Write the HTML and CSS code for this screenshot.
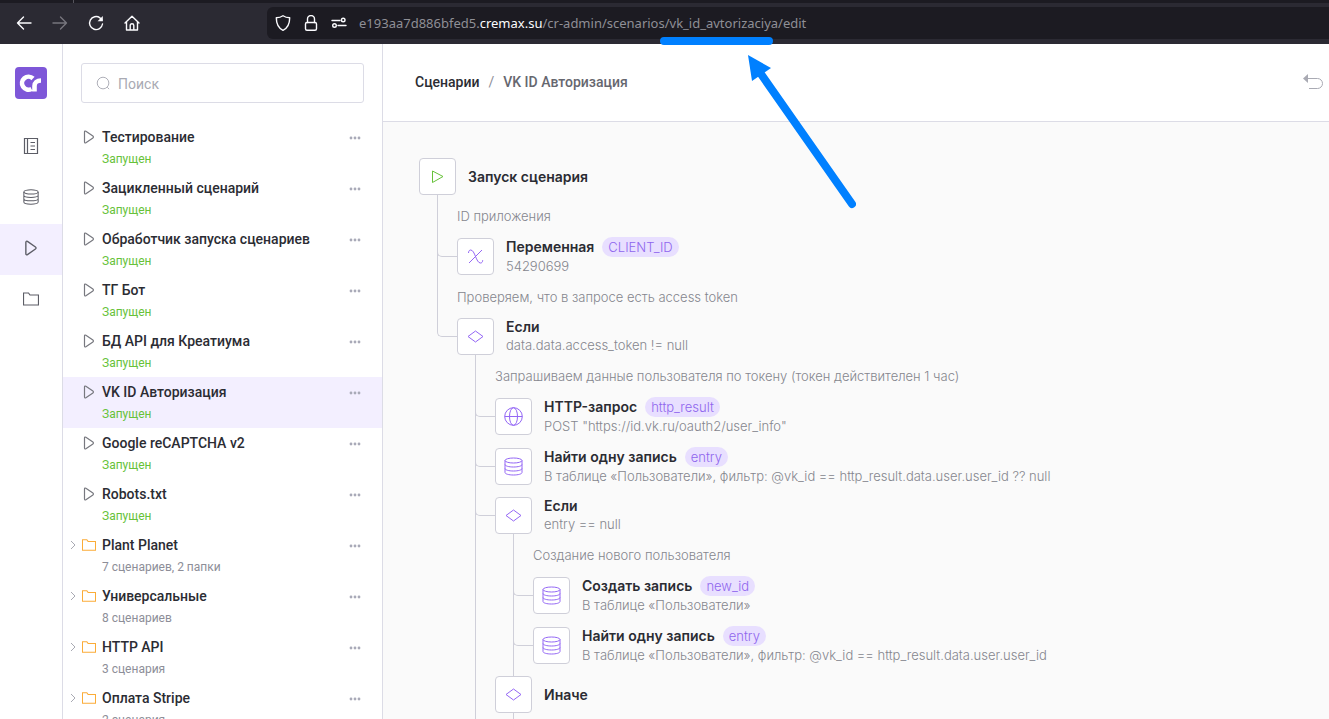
FILE: index.html
```html
<!DOCTYPE html>
<html lang="ru">
<head>
  <meta charset="UTF-8">
  <meta name="viewport" content="width=device-width, initial-scale=1.0">
  <title>VK ID Авторизация</title>
  <link rel="stylesheet" href="styles.css">
</head>
<body>

<!-- Общие иконки -->
<svg class="sprite" aria-hidden="true">
  <symbol id="play" viewBox="0 0 12 14"><path d="M1.500 2v10c0 .9.7 1.200 1.400.8l7-4.900c.7-.5.7-1.300 0-1.800l-7-4.900c-.7-.4-1.400-.1-1.400.8z"/></symbol>
  <symbol id="folder" viewBox="0 0 16 14"><path d="M.5 1h5l1.500 2h8.500v10H.5z"/></symbol>
  <symbol id="chevron" viewBox="0 0 6 10"><path d="M1 1l4 4-4 4"/></symbol>
  <symbol id="dots" viewBox="0 0 12 4"><circle cx="2" cy="2" r="1.400"/><circle cx="6" cy="2" r="1.400"/><circle cx="10" cy="2" r="1.400"/></symbol>
  <symbol id="db" viewBox="0 0 19 19"><ellipse cx="9.500" cy="3.500" rx="8.500" ry="2.500"/><path d="M1 3.500v12C1 17 4.800 18 9.500 18s8.500-1 8.500-2.500v-12M1 7.500C1 9 4.800 10 9.500 10S18 9 18 7.500M1 11.500C1 13 4.800 14 9.500 14s8.500-1 8.500-2.500"/></symbol>
  <symbol id="rhomb" viewBox="0 0 19 19"><path d="M9.500 4l7.500 5.500L9.500 15 2 9.500z"/></symbol>
</svg>

<div class="browser">
  <div class="tabs"></div>
  <div class="toolbar">
    <div class="nav">
      <button aria-label="Назад"><svg viewBox="0 0 16 16"><path d="M15 8H1.500M7.500 2L1.500 8l6 6"/></svg></button>
      <button class="disabled" aria-label="Вперёд"><svg viewBox="0 0 16 16"><path d="M1 8h13.500M8.500 2l6 6-6 6"/></svg></button>
      <button aria-label="Обновить"><svg viewBox="0 0 16 16"><path d="M14.500 9A6.500 6.500 0 1 1 12 2.900L14 5"/><path class="solid" d="M14.800 1v5.200H9.600z"/></svg></button>
      <button aria-label="Домой"><svg viewBox="0 0 16 16"><path d="M1 8l7-6.800L15 8M2.500 7v8h11V7M6.200 15v-4.500a1.800 1.800 0 0 1 3.600 0V15"/></svg></button>
    </div>
    <div class="address">
      <svg viewBox="0 0 16 16"><path d="M8 .8c2 1.400 4 2 6.700 2C14.700 9 13 13 8 15.300 3 13 1.300 9 1.300 2.800 4 2.800 6 2.200 8 .8z"/></svg>
      <svg viewBox="0 0 16 16"><rect x="2.500" y="7.500" width="11" height="7.800" rx="1.500"/><path d="M4.500 7.500V4a3.500 3.500 0 0 1 7 0v3.500"/></svg>
      <svg viewBox="0 0 16 16"><path d="M1 5.500h8M7 10.500h8"/><circle cx="12.200" cy="5" r="1.800"/><circle cx="3.500" cy="10.500" r="1.800"/></svg>
      <div class="url">e193aa7d886bfed5.<b>cremax.su</b>/cr-admin/scenarios/vk_id_avtorizaciya/edit</div>
    </div>
  </div>
</div>

<div class="app">
  <nav class="rail">
    <a class="logo" href="#" aria-label="Главная">
      <svg viewBox="0 0 32 32"><path d="M18 11.500A6.500 6.500 0 1 0 16.500 22M19.500 24.500V19c0-3.500 2.500-5.500 6.500-5.500"/></svg>
    </a>
    <a href="#" aria-label="Страницы"><svg viewBox="0 0 16 16"><path d="M1.500.5h13v15h-13zM4.500.5v15M7.500 4.500h4.500M7.500 8h4.500M7.500 11.500h4.500"/></svg></a>
    <a href="#" aria-label="База данных"><svg><use href="#db"/></svg></a>
    <a class="active" href="#" aria-label="Сценарии"><svg><use href="#play"/></svg></a>
    <a href="#" aria-label="Файлы"><svg><use href="#folder"/></svg></a>
  </nav>

  <aside class="sidebar">
    <label class="search">
      <svg viewBox="0 0 16 16"><circle cx="7.500" cy="7.500" r="6.200"/><path d="M12 12l2 2"/></svg>
      <input type="text" placeholder="Поиск" aria-label="Поиск">
    </label>
    <ul class="list">
      <li><svg class="play"><use href="#play"/></svg><a href="#">Тестирование</a><span class="on">Запущен</span><button aria-label="Меню"><svg><use href="#dots"/></svg></button></li>
      <li><svg class="play"><use href="#play"/></svg><a href="#">Зацикленный сценарий</a><span class="on">Запущен</span><button aria-label="Меню"><svg><use href="#dots"/></svg></button></li>
      <li><svg class="play"><use href="#play"/></svg><a href="#">Обработчик запуска сценариев</a><span class="on">Запущен</span><button aria-label="Меню"><svg><use href="#dots"/></svg></button></li>
      <li><svg class="play"><use href="#play"/></svg><a href="#">ТГ Бот</a><span class="on">Запущен</span><button aria-label="Меню"><svg><use href="#dots"/></svg></button></li>
      <li><svg class="play"><use href="#play"/></svg><a href="#">БД API для Креатиума</a><span class="on">Запущен</span><button aria-label="Меню"><svg><use href="#dots"/></svg></button></li>
      <li class="active"><svg class="play"><use href="#play"/></svg><a href="#">VK ID Авторизация</a><span class="on">Запущен</span><button aria-label="Меню"><svg><use href="#dots"/></svg></button></li>
      <li><svg class="play"><use href="#play"/></svg><a href="#">Google reCAPTCHA v2</a><span class="on">Запущен</span><button aria-label="Меню"><svg><use href="#dots"/></svg></button></li>
      <li><svg class="play"><use href="#play"/></svg><a href="#">Robots.txt</a><span class="on">Запущен</span><button aria-label="Меню"><svg><use href="#dots"/></svg></button></li>
      <li><svg class="chevron"><use href="#chevron"/></svg><svg class="folder"><use href="#folder"/></svg><a href="#">Plant Planet</a><span>7 сценариев, 2 папки</span><button aria-label="Меню"><svg><use href="#dots"/></svg></button></li>
      <li><svg class="chevron"><use href="#chevron"/></svg><svg class="folder"><use href="#folder"/></svg><a href="#">Универсальные</a><span>8 сценариев</span><button aria-label="Меню"><svg><use href="#dots"/></svg></button></li>
      <li><svg class="chevron"><use href="#chevron"/></svg><svg class="folder"><use href="#folder"/></svg><a href="#">HTTP API</a><span>3 сценария</span><button aria-label="Меню"><svg><use href="#dots"/></svg></button></li>
      <li><svg class="chevron"><use href="#chevron"/></svg><svg class="folder"><use href="#folder"/></svg><a href="#">Оплата Stripe</a><span>2 сценария</span><button aria-label="Меню"><svg><use href="#dots"/></svg></button></li>
    </ul>
  </aside>

  <main class="main">
    <header class="header">
      <div class="crumbs"><a href="#">Сценарии</a><i>/</i><span>VK ID Авторизация</span></div>
      <button class="undo" aria-label="Отменить"><svg viewBox="0 0 20 16"><path d="M4 4.500h10.500a5 5 0 0 1 0 10H6"/><path class="solid" d="M0 4.500L5 0v9z"/></svg></button>
    </header>

    <div class="canvas">
      <div class="node start">
        <div class="icon"><svg viewBox="0 0 19 19"><path d="M4.500 4v11.500l10.500-6z"/></svg></div>
        <div class="info"><h3>Запуск сценария</h3></div>
      </div>
      <ul class="branch">
        <li class="comment">ID приложения</li>
        <li>
          <div class="node">
            <div class="icon"><svg viewBox="0 0 19 19"><path d="M2.500 6c0-2 1-3 2.200-3C9 3 10 16 14.500 16c1.300 0 2.200-1 2.200-2.800M16 3L3 16"/></svg></div>
            <div class="info"><h3>Переменная <em>CLIENT_ID</em></h3><p>54290699</p></div>
          </div>
        </li>
        <li class="comment">Проверяем, что в запросе есть access token</li>
        <li class="last">
          <div class="node">
            <div class="icon"><svg><use href="#rhomb"/></svg></div>
            <div class="info"><h3>Если</h3><p>data.data.access_token != null</p></div>
          </div>
          <ul class="branch">
            <li class="comment">Запрашиваем данные пользователя по токену (токен действителен 1 час)</li>
            <li>
              <div class="node">
                <div class="icon"><svg viewBox="0 0 19 19"><circle cx="9.500" cy="9.500" r="8.800"/><ellipse cx="9.500" cy="9.500" rx="4" ry="8.800"/><path d="M.7 9.500h17.600"/></svg></div>
                <div class="info"><h3>HTTP-запрос <em>http_result</em></h3><p>POST "https://id.vk.ru/oauth2/user_info"</p></div>
              </div>
            </li>
            <li>
              <div class="node">
                <div class="icon"><svg><use href="#db"/></svg></div>
                <div class="info"><h3>Найти одну запись <em>entry</em></h3><p>В таблице «Пользователи», фильтр: @vk_id == http_result.data.user.user_id ?? null</p></div>
              </div>
            </li>
            <li>
              <div class="node">
                <div class="icon"><svg><use href="#rhomb"/></svg></div>
                <div class="info"><h3>Если</h3><p>entry == null</p></div>
              </div>
              <ul class="branch">
                <li class="comment">Создание нового пользователя</li>
                <li>
                  <div class="node">
                    <div class="icon"><svg><use href="#db"/></svg></div>
                    <div class="info"><h3>Создать запись <em>new_id</em></h3><p>В таблице «Пользователи»</p></div>
                  </div>
                </li>
                <li>
                  <div class="node">
                    <div class="icon"><svg><use href="#db"/></svg></div>
                    <div class="info"><h3>Найти одну запись <em>entry</em></h3><p>В таблице «Пользователи», фильтр: @vk_id == http_result.data.user.user_id</p></div>
                  </div>
                </li>
              </ul>
            </li>
            <li class="else">
              <div class="node">
                <div class="icon"><svg><use href="#rhomb"/></svg></div>
                <div class="info"><h3>Иначе</h3></div>
              </div>
              <ul class="branch"><li class="rest"></li></ul>
            </li>
          </ul>
        </li>
      </ul>
    </div>
  </main>
</div>

<!-- Подчёркивание и стрелка поверх страницы -->
<svg class="mark" viewBox="0 0 200 175" aria-hidden="true">
  <path d="M8 5h105M105 38l91 130"/>
  <path class="solid" d="M92 19l23 13-19 13z"/>
</svg>

</body>
</html>
```
FILE: styles.css
```css
* {
  box-sizing: border-box;
}
body {
  margin: 0;
  height: 100vh;
  display: flex;
  flex-direction: column;
  overflow: hidden;
  font-family: Roboto, sans-serif;
  font-size: 14px;
  color: #2b2c33;
}
ul, h3, p {
  margin: 0;
  padding: 0;
  list-style: none;
}
a {
  color: inherit;
  text-decoration: none;
}
button {
  padding: 0;
  border: 0;
  background: none;
  color: inherit;
  display: flex;
}
svg {
  display: block;
  flex: none;
  fill: none;
  stroke: currentColor;
}
.solid {
  fill: currentColor;
  stroke: none;
}
.sprite {
  position: absolute;
  width: 0;
  height: 0;
}

/* браузер */
.browser {
  flex: none;
  background: #2b2a33;
  color: #fbfbfe;
}
.tabs {
  width: 74px;
  height: 3px;
  border: solid #55545c;
  border-width: 0 1px 0 0;
  background: #1c1b22;
  box-shadow: 100vw 0 #1c1b22, 50vw 0 0 50vw #1c1b22;
  clip-path: inset(0 -100vw 0 0);
}
.toolbar {
  display: flex;
  height: 41px;
  padding: 4px 0 5px 16px;
}
.nav {
  display: flex;
  align-items: center;
  gap: 20px;
  width: 251px;
}
.nav svg, .address svg {
  width: 16px;
  height: 16px;
  stroke-width: 1.4;
  stroke-linecap: round;
  stroke-linejoin: round;
}
.nav .disabled {
  color: #77767e;
}
.address {
  flex: 1;
  display: flex;
  align-items: center;
  gap: 12px;
  padding-left: 8px;
  background: #1c1b22;
  border-radius: 6px 0 0 6px;
}
.url {
  font-family: "Noto Sans", sans-serif;
  font-size: 13px;
  color: #8f8f96;
  white-space: nowrap;
}
.url b {
  font-weight: 400;
  color: #fbfbfe;
}

/* каркас */
.app {
  flex: 1;
  display: flex;
  min-height: 0;
}
.rail {
  flex: none;
  width: 63px;
  border-right: 1px solid #dcdce6;
}
.rail a {
  display: flex;
  align-items: center;
  justify-content: center;
  height: 51px;
  padding-bottom: 4px;
  color: #5c5d66;
}
.rail .active {
  background: #f3efff;
}
.rail svg {
  width: 16px;
  height: 16px;
  stroke-width: 1.2;
}
.rail .logo {
  height: 78px;
  padding: 0;
}
.rail .logo svg {
  width: 32px;
  height: 32px;
  border-radius: 4px;
  background: #7e57d8;
  color: #fff;
  stroke-width: 4.6;
}

/* список сценариев */
.sidebar {
  flex: none;
  width: 320px;
  border-right: 1px solid #dcdce6;
}
.search {
  display: flex;
  align-items: center;
  gap: 7px;
  height: 40px;
  margin: 19px 18px;
  padding: 0 14px;
  border: 1px solid #dcdce6;
  border-radius: 3px;
  color: #a9aab3;
}
.search svg {
  width: 15px;
  height: 15px;
}
.search input {
  flex: 1;
  min-width: 0;
  padding: 2px 0 0;
  border: 0;
  outline: 0;
  background: none;
  font: 14px Roboto, sans-serif;
}
.search input::placeholder {
  color: #a9aab3;
}
.list li {
  display: grid;
  grid-template-columns: 6px 14px 1fr 12px;
  grid-template-rows: 20px 24px;
  column-gap: 6px;
  align-items: center;
  height: 51px;
  padding: 5px 21px 0 7px;
}
.list .active {
  background: #f3efff;
}
.list a {
  grid-column: 3;
  font-weight: 500;
}
.list span {
  grid-column: 3;
  grid-row: 2;
  font-size: 12px;
  color: #8d8e98;
}
.list .on {
  color: #67c23a;
}
.list button {
  grid-column: 4;
  grid-row: 1;
  padding-top: 2px;
  color: #a9aab8;
}
.list button svg {
  width: 12px;
  height: 4px;
  fill: currentColor;
  stroke: none;
}
.list .play {
  grid-column: 2;
  width: 12px;
  height: 14px;
  margin-left: 1px;
  color: #77787f;
  stroke-width: 1.2;
}
.list .chevron {
  width: 6px;
  height: 10px;
  color: #a9aab3;
}
.list .folder {
  width: 14px;
  height: 14px;
  color: #fbac38;
  stroke-width: 1.3;
}

/* рабочая область */
.main {
  flex: 1;
  min-width: 0;
  display: flex;
  flex-direction: column;
}
.header {
  flex: none;
  display: flex;
  align-items: center;
  justify-content: space-between;
  height: 78px;
  padding: 0 6px 2px 32px;
  border-bottom: 1px solid #dcdce6;
}
.crumbs {
  display: flex;
  gap: 9px;
  font-weight: 500;
}
.crumbs i {
  font-style: normal;
  font-weight: 400;
  color: #8d8e98;
}
.crumbs span {
  color: #66676f;
}
.undo {
  color: #a9aab3;
}
.undo svg {
  width: 20px;
  height: 16px;
}
.canvas {
  flex: 1;
  min-height: 0;
  overflow: hidden;
  padding: 36px;
  background: #fafafa;
  font-family: Inter, sans-serif;
}
.node {
  display: flex;
  align-items: center;
  gap: 12px;
  position: relative;
}
.icon {
  flex: none;
  display: flex;
  align-items: center;
  justify-content: center;
  width: 37px;
  height: 37px;
  border: 1px solid #cfcfd9;
  border-radius: 4px;
  background: #fff;
  color: #9467f5;
}
.start .icon {
  color: #67c23a;
}
.icon svg {
  width: 19px;
  height: 19px;
}
.info h3 {
  display: flex;
  align-items: center;
  gap: 8px;
  font-size: 14px;
  font-weight: 600;
  line-height: 18px;
  white-space: nowrap;
}
.info em {
  padding: 0 6px;
  border-radius: 10px;
  background: #e8dfff;
  color: #8f66ee;
  font-size: 13px;
  font-style: normal;
  font-weight: 300;
  line-height: 20px;
}
.info p {
  font-size: 13px;
  font-weight: 300;
  line-height: 19px;
  color: #85868e;
  white-space: nowrap;
}

/* ветки */
.branch {
  margin-left: 38px;
}
.branch > li {
  position: relative;
  padding-top: 11px;
}
.branch > .comment {
  font-size: 13px;
  font-weight: 300;
  line-height: 20px;
  color: #85868e;
}
.branch > li::after {
  content: "";
  position: absolute;
  top: 0;
  bottom: 0;
  left: -20px;
  border-left: 1px solid #cfcfd9;
}
.branch > .last::after {
  display: none;
}
.branch > li > .node::before {
  content: "";
  position: absolute;
  top: -11px;
  bottom: 50%;
  left: -20px;
  width: 20px;
  border: solid #cfcfd9;
  border-width: 0 0 1px 1px;
  border-radius: 0 0 0 5px;
}
.branch > .else > .node::before {
  left: 18px;
  width: 0;
  bottom: 100%;
  border-width: 0 0 0 1px;
  border-radius: 0;
}
.rest {
  height: 100px;
}

.mark {
  position: absolute;
  top: 36px;
  left: 656px;
  width: 200px;
  height: 175px;
  color: #0080ff;
  stroke-width: 8;
  stroke-linecap: round;
}
```
